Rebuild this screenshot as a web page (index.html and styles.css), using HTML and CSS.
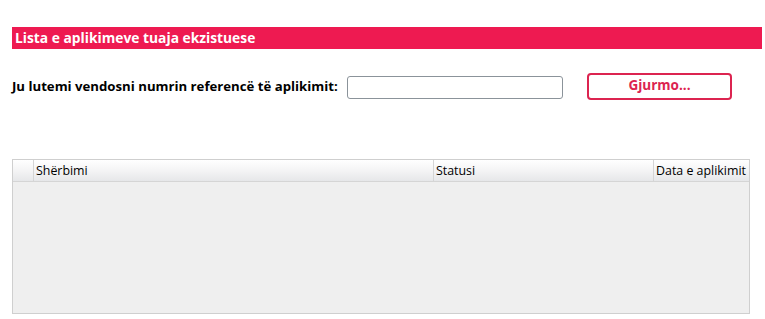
FILE: index.html
```html
<!DOCTYPE html>
<html lang="sq">
  <head>
    <meta charset="utf-8" />
    <meta name="viewport" content="width=device-width, initial-scale=1" />
    <title>Lista e aplikimeve</title>
    <link rel="stylesheet" href="styles.css">
  </head>
  <body>
    <div class="page">
      <h2 class="title-bar">Lista e aplikimeve tuaja ekzistuese</h2>
      <div class="search-row">
        <label for="ref" class="search-label">Ju lutemi vendosni numrin referencë të aplikimit:</label>
        <input type="text" id="ref" class="search-input" />
        <button type="button" class="search-btn">Gjurmo...</button>
      </div>
      <div class="grid">
        <div class="grid-head">
          <div class="cell cell-sel"></div>
          <div class="cell cell-service">Shërbimi</div>
          <div class="cell cell-status">Statusi</div>
          <div class="cell cell-date">Data e aplikimit</div>
        </div>
        <div class="grid-body"></div>
      </div>
      <h3 class="next-title">Të</h3>
    </div>
  </body>
</html>
```

FILE: styles.css
```css
body {
  margin: 0;
  font-family: "Open Sans", "Noto Sans", sans-serif;
  background: #ffffff;
  color: #000000;
}
.page {
  padding: 27px 3px 0 12px;
}
.title-bar {
  margin: 0;
  height: 22px;
  line-height: 21px;
  background-color: #ee1a51;
  color: #ffffff;
  font-size: 13.8px;
  font-weight: 700;
  padding-left: 3px;
}
.search-row {
  display: flex;
  align-items: center;
  margin-top: 24px;
  height: 26px;
}
.search-label {
  font-size: 13.2px;
  font-weight: 700;
  width: 335px;
}
.search-input {
  width: 216px;
  height: 23px;
  box-sizing: border-box;
  border: 1px solid #8b939a;
  border-radius: 3px;
  margin: 2px 0 0 0;
  padding: 2px 4px;
}
.search-btn {
  margin-left: 24px;
  width: 145px;
  height: 27px;
  box-sizing: border-box;
  background: #ffffff;
  border: 2px solid #dc2450;
  border-radius: 4px;
  color: #dc2450;
  font-family: inherit;
  font-size: 13.5px;
  font-weight: 700;
  padding: 0 0 3px 0;
}
.grid {
  margin-top: 60px;
  width: 738px;
  height: 155px;
  box-sizing: border-box;
  border: 1px solid #cfcfcf;
  display: flex;
  flex-direction: column;
}
.grid-head {
  display: flex;
  height: 21px;
  background: linear-gradient(#ffffff, #f4f4f5 50%, #e6e7e9);
  border-bottom: 1px solid #d5d5d5;
}
.cell {
  font-size: 12.4px;
  line-height: 21px;
  padding-left: 2px;
  border-right: 1px solid #d5d5d5;
  white-space: nowrap;
  overflow: hidden;
}
.cell-sel {
  width: 18px;
}
.cell-service {
  width: 397px;
}
.cell-status {
  width: 217px;
}
.cell-date {
  flex: 1;
  border-right: none;
}
.grid-body {
  flex: 1;
  background: #efefef;
}
.next-title {
  margin: 2px 0 0 3px;
  font-size: 20px;
  font-weight: 700;
}
```
